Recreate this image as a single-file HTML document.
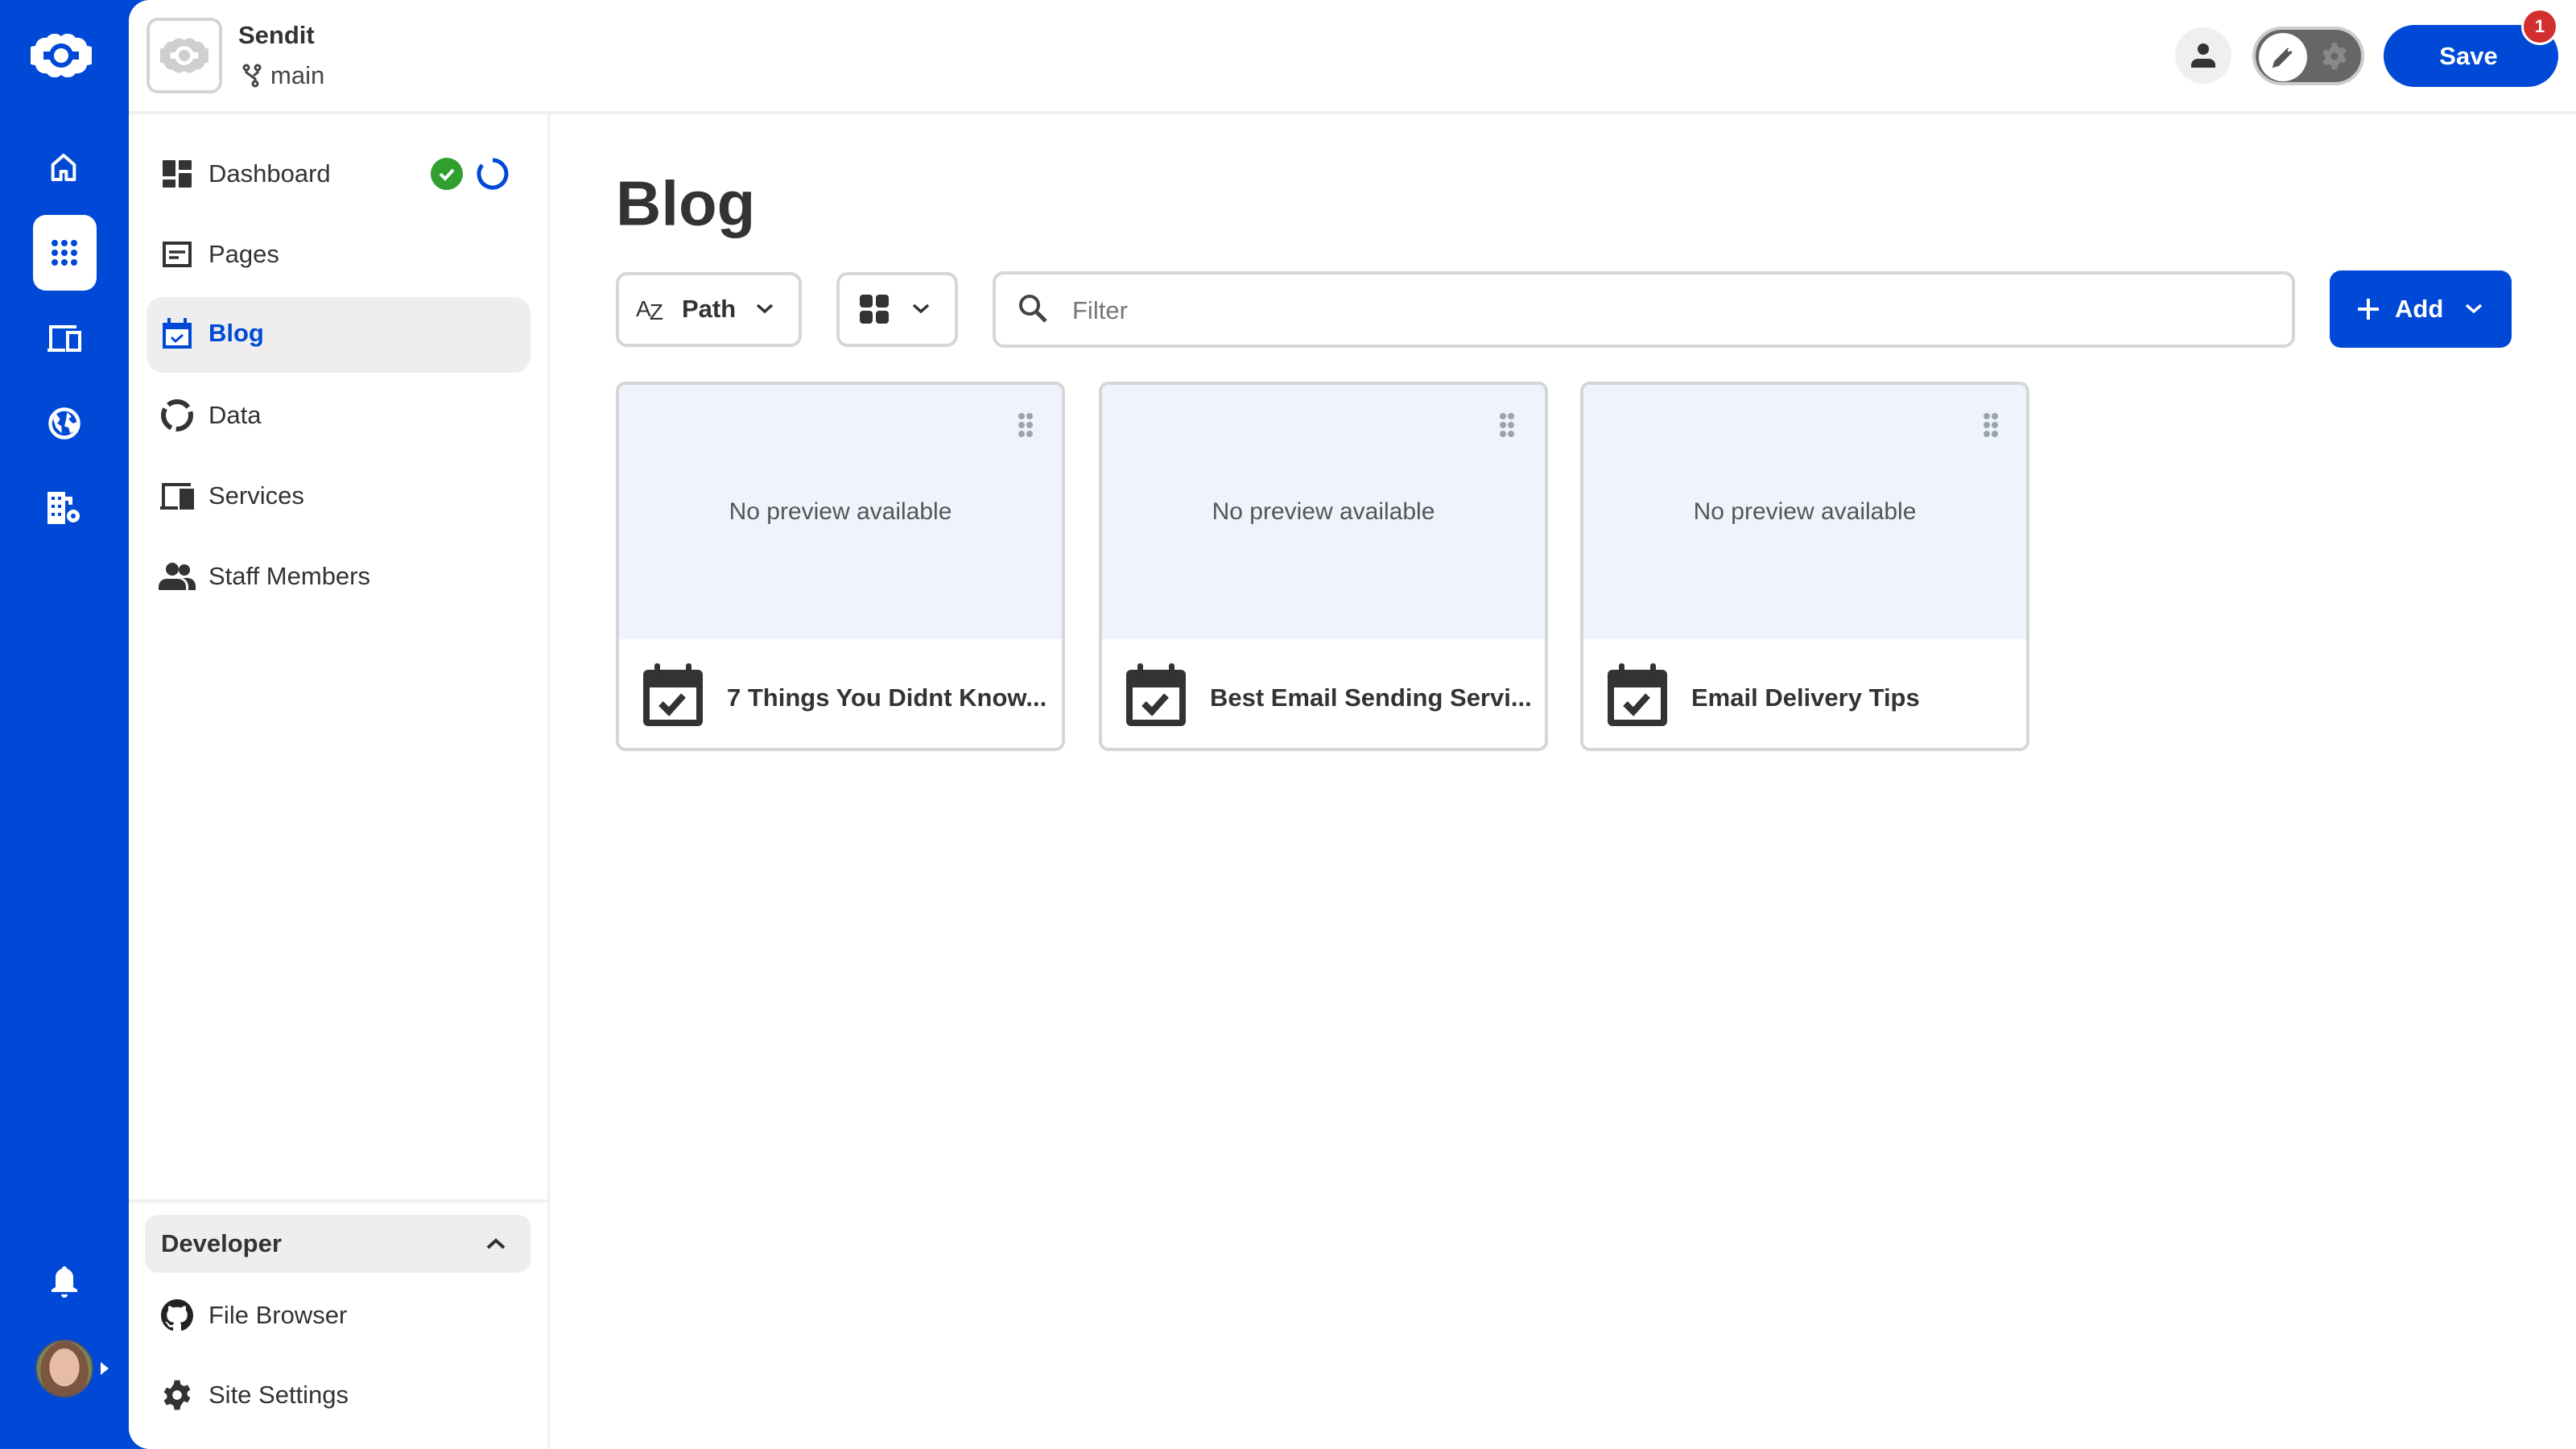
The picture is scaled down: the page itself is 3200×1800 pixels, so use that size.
<!DOCTYPE html>
<html><head><meta charset="utf-8"><style>
*{box-sizing:border-box;margin:0;padding:0}
body{width:3200px;height:1800px;background:#0049d6;font-family:"Liberation Sans",sans-serif;color:#333;position:relative;overflow:hidden}
.abs{position:absolute}
.panel{position:absolute;left:160px;top:0;width:3040px;height:1800px;background:#fff;border-radius:26px 0 0 26px}
.side{position:absolute;left:160px;top:142px;width:523px;height:1658px;border-right:3px solid #efefef;background:#fff;border-radius:0 0 0 26px}
.hdr{position:absolute;left:160px;top:0;width:3040px;height:142px;border-bottom:4px solid #efefef}
.nav{position:absolute;left:259px;font-size:31px;color:#333;transform:translateY(-50%)}
.ic{position:absolute;transform:translate(-50%,-50%)}
.btn{position:absolute;border:4px solid #d6d6d6;border-radius:14px;background:#fff}
.card{position:absolute;top:474px;width:558px;height:459px;border:4px solid #d6d6d6;border-radius:12px;overflow:hidden;background:#fff}
.prev{position:absolute;left:0;top:0;right:0;height:316px;background:#eef3fc;display:flex;align-items:center;justify-content:center;font-size:30px;color:#555}
.ct{position:absolute;left:134px;top:389px;transform:translateY(-50%);font-size:31px;font-weight:bold;color:#333;white-space:nowrap}
</style></head><body>
<!-- rail icons -->
<svg class="ic" style="left:76px;top:69px" width="76" height="54" viewBox="0 0 76 54"><path fill="#fff" d="M20 5a12 12 0 0 1 18-2a12 12 0 0 1 18 2a12 12 0 0 1 14 10a12 12 0 0 1 0 24a12 12 0 0 1-14 10a12 12 0 0 1-18 2a12 12 0 0 1-18-2a12 12 0 0 1-14-10a12 12 0 0 1 0-24a12 12 0 0 1 14-10z"/><circle cx="38" cy="27" r="15" fill="#0049d6"/><circle cx="38" cy="27" r="9" fill="#fff"/><rect x="16" y="22" width="8" height="10" fill="#0049d6"/><rect x="52" y="22" width="8" height="10" fill="#0049d6"/></svg>
<svg class="ic" style="left:79px;top:208px" width="40" height="40" viewBox="0 0 24 24"><path d="M4 21V10l8-7 8 7v11h-6v-6h-4v6z" fill="none" stroke="#fff" stroke-width="2.4" stroke-linejoin="round"/></svg>
<div class="abs" style="left:41px;top:267px;width:79px;height:94px;background:#fff;border-radius:16px"></div>
<svg class="ic" style="left:80px;top:314px" width="34" height="34" viewBox="0 0 34 34" fill="#0049d6"><circle cx="5" cy="5" r="4"/><circle cx="17" cy="5" r="4"/><circle cx="29" cy="5" r="4"/><circle cx="5" cy="17" r="4"/><circle cx="17" cy="17" r="4"/><circle cx="29" cy="17" r="4"/><circle cx="5" cy="29" r="4"/><circle cx="17" cy="29" r="4"/><circle cx="29" cy="29" r="4"/></svg>
<svg class="ic" style="left:80px;top:420px" width="42" height="34" viewBox="0 0 42 34"><path d="M4 30V3h32" fill="none" stroke="#fff" stroke-width="4"/><path d="M0 30h22v4H0z" fill="#fff"/><rect x="25" y="10" width="15" height="22" fill="none" stroke="#fff" stroke-width="4"/></svg>
<svg class="ic" style="left:80px;top:526px" width="42" height="42" viewBox="0 0 24 24"><circle cx="12" cy="12" r="10" fill="none" stroke="#fff" stroke-width="2.6"/><path d="M6 5l3 4-2 3 3 2v5l-4-4-2-6zM14 4l3 3-2 2 3 3 3-1-1 6-4 2-1-4-3-1 1-4z" fill="#fff"/></svg>
<svg class="ic" style="left:80px;top:631px" width="42" height="40" viewBox="0 0 42 40" fill="#fff"><path d="M0 0h22v6h9v10h-5V11H22v29H0z"/><g fill="#0049d6"><rect x="5" y="6" width="4" height="4"/><rect x="13" y="6" width="4" height="4"/><rect x="5" y="16" width="4" height="4"/><rect x="13" y="16" width="4" height="4"/><rect x="5" y="26" width="4" height="4"/><rect x="13" y="26" width="4" height="4"/></g><circle cx="32" cy="30" r="8"/><circle cx="32" cy="30" r="3" fill="#0049d6"/></svg>
<svg class="ic" style="left:80px;top:1592px" width="34" height="42" viewBox="0 0 34 42" fill="#fff"><path d="M17 2a3 3 0 0 1 3 3a11 11 0 0 1 8 11v12l5 3v3H1v-3l5-3V16a11 11 0 0 1 8-11a3 3 0 0 1 3-3z"/><path d="M13 37h8a4 4 0 0 1-8 0z"/></svg>
<div class="abs" style="left:44px;top:1664px;width:72px;height:72px;border-radius:50%;background:radial-gradient(ellipse 30% 38% at 50% 48%,#e6bda4 0 90%,transparent 92%),radial-gradient(ellipse 48% 60% at 50% 55%,#7a5540 0 90%,transparent 92%),#7c8558;border:2px solid #556"></div>
<svg class="ic" style="left:130px;top:1700px" width="10" height="16" viewBox="0 0 10 16"><path d="M0 0l10 8-10 8z" fill="#fff"/></svg>

<div class="panel"></div>
<div class="hdr"></div>
<div class="side"></div>

<!-- header -->
<div class="abs" style="left:182px;top:22px;width:94px;height:94px;border:4px solid #d4d4d4;border-radius:14px;background:#fff"></div>
<svg class="ic" style="left:229px;top:69px" width="60" height="44" viewBox="0 0 76 54"><path fill="#cfcfcf" d="M20 5a12 12 0 0 1 18-2a12 12 0 0 1 18 2a12 12 0 0 1 14 10a12 12 0 0 1 0 24a12 12 0 0 1-14 10a12 12 0 0 1-18 2a12 12 0 0 1-18-2a12 12 0 0 1-14-10a12 12 0 0 1 0-24a12 12 0 0 1 14-10z"/><circle cx="38" cy="27" r="15" fill="#fff"/><circle cx="38" cy="27" r="9" fill="#cfcfcf"/><rect x="16" y="22" width="8" height="10" fill="#fff"/><rect x="52" y="22" width="8" height="10" fill="#fff"/></svg>
<div class="abs" style="left:296px;top:26px;font-size:31px;font-weight:bold;color:#333">Sendit</div>
<svg class="ic" style="left:313px;top:94px" width="24" height="30" viewBox="0 0 24 30" fill="none" stroke="#444" stroke-width="3"><circle cx="5" cy="5" r="3"/><circle cx="19" cy="5" r="3"/><circle cx="16" cy="25" r="3"/><path d="M5 8v3l11 8v3M19 8v3l-5 4"/></svg>
<div class="abs" style="left:336px;top:76px;font-size:31px;color:#444">main</div>

<div class="abs" style="left:2702px;top:34px;width:70px;height:70px;border-radius:50%;background:#efefef"></div>
<svg class="ic" style="left:2737px;top:69px" width="34" height="34" viewBox="0 0 34 34" fill="#333"><circle cx="17" cy="9" r="7"/><path d="M2 30a8 8 0 0 1 8-9h14a8 8 0 0 1 8 9v2H2z"/></svg>
<div class="abs" style="left:2798px;top:33px;width:139px;height:73px;border-radius:37px;background:#666;border:4px solid #ccc"></div>
<div class="abs" style="left:2806px;top:41px;width:60px;height:60px;border-radius:50%;background:#fff"></div>
<svg class="ic" style="left:2836px;top:71px" width="40" height="40" viewBox="0 0 24 24"><path d="M4 20l1.5-5 10-10 3.5 3.5-10 10z" fill="#555"/><circle cx="16.5" cy="7" r="1" fill="#fff"/></svg>
<svg class="ic" style="left:2900px;top:70px" width="36" height="40" viewBox="0 0 24 24"><path fill="#888" d="M10 1h4l.6 3 2.4 1.4 2.8-1 2 3.4-2.2 2v2.4l2.2 2-2 3.4-2.8-1L14.6 20 14 23h-4l-.6-3L7 18.6l-2.8 1-2-3.4 2.2-2v-2.4l-2.2-2 2-3.4 2.8 1L9.4 4z"/><circle cx="12" cy="12" r="3" fill="#666"/></svg>
<div class="abs" style="left:2961px;top:31px;width:217px;height:77px;border-radius:39px;background:#0049d6;color:#fff;font-size:31px;font-weight:bold;display:flex;align-items:center;justify-content:center;padding-right:6px">Save</div>
<div class="abs" style="left:3132px;top:10px;width:46px;height:46px;border-radius:50%;background:#d32f2f;border:3px solid #fff;color:#fff;font-size:22px;font-weight:bold;display:flex;align-items:center;justify-content:center">1</div>

<!-- side nav -->
<div class="abs" style="left:182px;top:369px;width:477px;height:94px;background:#eee;border-radius:20px"></div>
<svg class="ic" style="left:220px;top:216px" width="36" height="34" viewBox="0 0 36 34" fill="#333"><rect x="0" y="0" width="16" height="20" rx="1"/><rect x="20" y="0" width="16" height="12" rx="1"/><rect x="0" y="24" width="16" height="10" rx="1"/><rect x="20" y="16" width="16" height="18" rx="1"/></svg>
<div class="nav" style="top:216px">Dashboard</div>
<svg class="ic" style="left:555px;top:216px" width="40" height="40" viewBox="0 0 40 40"><circle cx="20" cy="20" r="20" fill="#2fa02f"/><path d="M12 20l6 6 10-11" fill="none" stroke="#fff" stroke-width="4"/></svg>
<svg class="ic" style="left:612px;top:216px" width="42" height="42" viewBox="0 0 42 42"><path d="M21 4A17 17 0 1 1 8 10" fill="none" stroke="#0049d6" stroke-width="5"/></svg>
<svg class="ic" style="left:220px;top:316px" width="36" height="32" viewBox="0 0 36 32"><rect x="2" y="2" width="32" height="28" fill="none" stroke="#333" stroke-width="4"/><path d="M8 13h20M8 20h12" stroke="#333" stroke-width="3.5"/></svg>
<div class="nav" style="top:316px">Pages</div>
<svg class="ic" style="left:220px;top:414px" width="36" height="38" viewBox="0 0 36 38"><path d="M0 6h36v32H0z" fill="#0049d6"/><rect x="4" y="14" width="28" height="20" fill="#fff"/><rect x="6" y="0" width="4" height="8" fill="#0049d6"/><rect x="26" y="0" width="4" height="8" fill="#0049d6"/><path d="M11 24l5 5 9-8" fill="none" stroke="#0049d6" stroke-width="3"/></svg>
<div class="nav" style="top:414px;color:#0049d6;font-weight:bold">Blog</div>
<svg class="ic" style="left:220px;top:516px" width="42" height="42" viewBox="0 0 42 42"><circle cx="21" cy="21" r="17" fill="none" stroke="#333" stroke-width="6" stroke-dasharray="28 6"/></svg>
<div class="nav" style="top:516px">Data</div>
<svg class="ic" style="left:220px;top:616px" width="42" height="34" viewBox="0 0 42 34"><path d="M4 30V3h34" fill="none" stroke="#333" stroke-width="4"/><path d="M0 30h22v4H0z" fill="#333"/><rect x="24" y="8" width="18" height="26" fill="#333"/></svg>
<div class="nav" style="top:616px">Services</div>
<svg class="ic" style="left:220px;top:716px" width="46" height="34" viewBox="0 0 46 34" fill="#333"><circle cx="17" cy="8" r="8"/><circle cx="32" cy="9" r="7"/><path d="M0 34v-4a10 10 0 0 1 10-10h14a10 10 0 0 1 10 10v4z"/><path d="M30 19h6a10 10 0 0 1 10 10v5h-9v-4a12 12 0 0 0-7-11z"/></svg>
<div class="nav" style="top:716px">Staff Members</div>

<div class="abs" style="left:160px;top:1490px;width:520px;height:4px;background:#efefef"></div>
<div class="abs" style="left:180px;top:1509px;width:479px;height:72px;background:#eee;border-radius:16px"></div>
<div class="abs" style="left:200px;top:1545px;transform:translateY(-50%);font-size:31px;font-weight:bold;color:#333">Developer</div>
<svg class="ic" style="left:616px;top:1545px" width="26" height="16" viewBox="0 0 26 16"><path d="M3 13l10-9 10 9" fill="none" stroke="#333" stroke-width="4"/></svg>
<svg class="ic" style="left:220px;top:1634px" width="40" height="40" viewBox="0 0 16 16"><path fill="#222" d="M8 0C3.58 0 0 3.58 0 8c0 3.54 2.29 6.53 5.47 7.590.4.07.55-.17.55-.38v-1.34c-2.230.48-2.7-1.07-2.7-1.07-.36-.92-.89-1.170-.89-1.17-.73-.5.05-.49.05-.49.8.06 1.230.83 1.230.83.72 1.22 1.870.87 2.330.66.07-.52.28-.87.51-1.07-1.78-.2-3.65-.89-3.65-3.95 0-.87.31-1.590.82-2.15-.08-.2-.36-1.02.08-2.12 0 0 .67-.21 2.200.82a7.6 7.6 0 0 1 4 0c1.53-1.04 2.2-.82 2.2-.82.44 1.1.16 1.920.08 2.120.51.56.82 1.270.82 2.15 0 3.07-1.87 3.75-3.65 3.950.29.25.54.73.54 1.48v2.2c0 .21.15.46.55.38A8.01 8.01 0 0 0 16 8c0-4.42-3.58-8-8-8z"/></svg>
<div class="nav" style="top:1634px">File Browser</div>
<svg class="ic" style="left:220px;top:1733px" width="40" height="42" viewBox="0 0 24 24"><path fill="#333" d="M10 1h4l.6 3 2.4 1.4 2.8-1 2 3.4-2.2 2v2.4l2.2 2-2 3.4-2.8-1L14.6 20 14 23h-4l-.6-3L7 18.6l-2.8 1-2-3.4 2.2-2v-2.4l-2.2-2 2-3.4 2.8 1L9.4 4z"/><circle cx="12" cy="12" r="3.5" fill="#fff"/></svg>
<div class="nav" style="top:1733px">Site Settings</div>

<!-- main -->
<div class="abs" style="left:765px;top:253px;transform:translateY(-50%);font-size:78px;font-weight:bold;color:#333">Blog</div>

<div class="btn" style="left:765px;top:338px;width:231px;height:93px"></div>
<div class="abs" style="left:790px;top:384px;transform:translateY(-50%);font-size:28px;color:#333;letter-spacing:-2px">A<span style="position:relative;top:4px">Z</span></div>
<div class="abs" style="left:847px;top:384px;transform:translateY(-50%);font-size:31px;font-weight:bold;color:#333">Path</div>
<svg class="ic" style="left:950px;top:383px" width="24" height="14" viewBox="0 0 24 14"><path d="M3 3l9 8 9-8" fill="none" stroke="#333" stroke-width="3.5"/></svg>
<div class="btn" style="left:1039px;top:338px;width:151px;height:93px"></div>
<svg class="ic" style="left:1086px;top:384px" width="36" height="36" viewBox="0 0 36 36" fill="#333"><rect width="16" height="16" rx="4"/><rect x="20" width="16" height="16" rx="4"/><rect y="20" width="16" height="16" rx="4"/><rect x="20" y="20" width="16" height="16" rx="4"/></svg>
<svg class="ic" style="left:1144px;top:383px" width="24" height="14" viewBox="0 0 24 14"><path d="M3 3l9 8 9-8" fill="none" stroke="#333" stroke-width="3.5"/></svg>
<div class="btn" style="left:1233px;top:337px;width:1618px;height:95px"></div>
<svg class="ic" style="left:1283px;top:383px" width="40" height="40" viewBox="0 0 40 40"><circle cx="16" cy="16" r="11" fill="none" stroke="#444" stroke-width="4"/><path d="M24 24l12 12" stroke="#444" stroke-width="5"/></svg>
<div class="abs" style="left:1332px;top:386px;transform:translateY(-50%);font-size:31px;color:#777">Filter</div>
<div class="abs" style="left:2894px;top:336px;width:226px;height:96px;background:#0049d6;border-radius:14px"></div>
<svg class="ic" style="left:2942px;top:384px" width="30" height="30" viewBox="0 0 30 30"><path d="M15 2v26M2 15h26" stroke="#fff" stroke-width="4"/></svg>
<div class="abs" style="left:2975px;top:384px;transform:translateY(-50%);font-size:31px;font-weight:bold;color:#fff">Add</div>
<svg class="ic" style="left:3073px;top:383px" width="24" height="14" viewBox="0 0 24 14"><path d="M3 3l9 8 9-8" fill="none" stroke="#fff" stroke-width="3.5"/></svg>

<div class="card" style="left:765px"><div class="prev">No preview available</div><div class="ct">7 Things You Didnt Know...</div></div>
<div class="card" style="left:1365px"><div class="prev">No preview available</div><div class="ct">Best Email Sending Servi...</div></div>
<div class="card" style="left:1963px"><div class="prev">No preview available</div><div class="ct">Email Delivery Tips</div></div>

<svg style="position:absolute;left:0;top:0" width="3200" height="1800">
<defs>
<g id="cal"><rect x="0" y="8" width="74" height="70" rx="6" fill="#333"/><rect x="8" y="30" width="58" height="40" fill="#fff"/><rect x="14" y="0" width="7" height="16" rx="3" fill="#333"/><rect x="53" y="0" width="7" height="16" rx="3" fill="#333"/><path d="M22 50l10 10 18-20" fill="none" stroke="#333" stroke-width="8"/></g>
<g id="dt" fill="#9aa3b0"><circle cx="4" cy="4" r="4"/><circle cx="14" cy="4" r="4"/><circle cx="4" cy="15" r="4"/><circle cx="14" cy="15" r="4"/><circle cx="4" cy="26" r="4"/><circle cx="14" cy="26" r="4"/></g>
</defs>
<use href="#cal" x="799" y="824"/><use href="#cal" x="1399" y="824"/><use href="#cal" x="1997" y="824"/>
<use href="#dt" x="1265" y="513"/><use href="#dt" x="1863" y="513"/><use href="#dt" x="2464" y="513"/>
</svg>
</body></html>
